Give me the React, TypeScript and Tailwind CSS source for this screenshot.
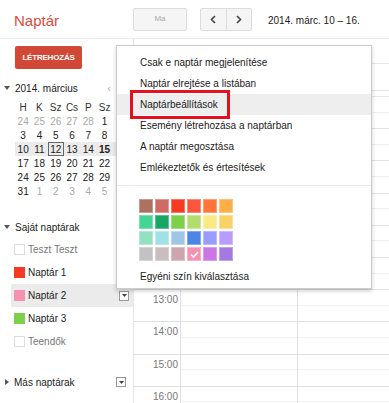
const swatches = [
  ["#ac725e", "#d06b64", "#f83a22", "#fa573c", "#ff7537", "#ffad46"],
  ["#42d692", "#16a765", "#7bd148", "#b3dc6c", "#fbe983", "#fad165"],
  ["#92e1c0", "#9fe1e7", "#9fc6e7", "#4986e7", "#9a9cff", "#b99aff"],
  ["#c2c2c2", "#cabdbf", "#cca6ac", "#f691b2", "#cd74e6", "#a47ae2"],
];

const weeks = [
  [24, 25, 26, 27, 28, 1, 2],
  [3, 4, 5, 6, 7, 8, 9],
  [10, 11, 12, 13, 14, 15, 16],
  [17, 18, 19, 20, 21, 22, 23],
  [24, 25, 26, 27, 28, 29, 30],
  [31, 1, 2, 3, 4, 5, 6],
];

const calendars = [
  { name: "Teszt Teszt", color: "", muted: true },
  { name: "Naptár 1", color: "bg-[#f83a22]" },
  { name: "Naptár 2", color: "bg-[#f691b2]", active: true },
  { name: "Naptár 3", color: "bg-[#7bd148]" },
  { name: "Teendők", color: "", muted: true },
];

const menuItems = [
  "Csak e naptár megjelenítése",
  "Naptár elrejtése a listában",
  "Naptárbeállítások",
  "Esemény létrehozása a naptárban",
  "A naptár megosztása",
  "Emlékeztetők és értesítések",
];

function Caret({ right }: { right?: boolean }) {
  return right ? (
    <svg width="4" height="6" viewBox="0 0 4 6">
      <path d="M0 0 L4 3 L0 6 Z" fill="#555" />
    </svg>
  ) : (
    <svg width="6" height="4" viewBox="0 0 6 4">
      <path d="M0 0 L6 0 L3 4 Z" fill="#555" />
    </svg>
  );
}

function DropBox() {
  return (
    <div className="flex h-[10px] w-[10px] items-center justify-center border border-[#999] bg-white">
      <svg width="5" height="3" viewBox="0 0 5 3">
        <path d="M0 0 L5 0 L2.5 3 Z" fill="#444" />
      </svg>
    </div>
  );
}

export default function App() {
  return (
    <div className="relative h-[403px] w-[389px] overflow-hidden bg-white font-['Liberation_Sans',Arial,sans-serif] text-[10px] text-[#222]">
      {/* top bar */}
      <div className="flex h-[39px] items-center border-b border-[#ebebeb]">
        <div className="w-[133px] pl-[14px] pt-[5px] text-[15px] text-[#dd4b39]">Naptár</div>
        <div className="flex h-[23px] w-[54px] items-center justify-center rounded-[2px] border border-[#dcdcdc] bg-[#f5f5f5] text-[8px] text-[#aaa]">
          Ma
        </div>
        <div className="ml-[13px] flex h-[23px] w-[52px] rounded-[2px] border border-[#dcdcdc] bg-[#f5f5f5]">
          <div className="flex flex-1 items-center justify-center border-r border-[#dcdcdc]">
            <svg width="6" height="9" viewBox="0 0 6 9">
              <path d="M5 1 L1.5 4.5 L5 8" stroke="#444" strokeWidth="1.6" fill="none" />
            </svg>
          </div>
          <div className="flex flex-1 items-center justify-center">
            <svg width="6" height="9" viewBox="0 0 6 9">
              <path d="M1 1 L4.5 4.5 L1 8" stroke="#444" strokeWidth="1.6" fill="none" />
            </svg>
          </div>
        </div>
        <div className="ml-[16px] pt-[2px] text-[10px] text-[#222]">2014. márc. 10 – 16.</div>
      </div>

      <div className="flex">
        {/* sidebar */}
        <div className="w-[133px] shrink-0">
          <div className="ml-[15px] mt-[7px] flex h-[23px] w-[67px] items-center justify-center rounded-[2px] bg-[#d14836] text-[8px] font-bold tracking-[-0.2px] text-white">
            LÉTREHOZÁS
          </div>

          <div className="mt-[12px] flex h-[14px] items-center pl-[4px]">
            <Caret />
            <span className="ml-[5px]">2014. március</span>
            <span className="ml-auto mr-[22px] text-[11px] text-[#aaa]">‹</span>
          </div>

          <div className="ml-[15px] mt-[5px] w-[114px]">
            <div className="grid h-[14px] grid-cols-7 items-center text-center text-[#333]">
              {["H", "K", "Sz", "Cs", "P", "Sz", ""].map((d, i) => (
                <span key={i}>{d}</span>
              ))}
            </div>
            {weeks.map((w, wi) => (
              <div
                key={wi}
                className={`grid h-[14px] grid-cols-7 items-center text-center ${wi === 2 ? "bg-[#ebebeb]" : ""}`}
              >
                {w.map((d, di) => {
                  const out = (wi === 0 && di < 5) || (wi === 5 && di > 0);
                  const today = wi === 2 && di === 2;
                  const bold = wi === 2 && di === 5;
                  return (
                    <span
                      key={di}
                      className={`flex h-[14px] items-center justify-center ${out ? "text-[#aaa]" : "text-[#222]"} ${bold ? "font-bold" : ""} ${today ? "border border-[#666]" : ""}`}
                    >
                      {di < 6 ? d : ""}
                    </span>
                  );
                })}
              </div>
            ))}
          </div>

          <div className="mt-[22px] flex h-[14px] items-center pl-[4px]">
            <Caret />
            <span className="ml-[5px]">Saját naptárak</span>
          </div>

          <div className="mt-[4px]">
            {calendars.map((c) => (
              <div
                key={c.name}
                className={`ml-[11px] flex h-[23px] items-center pl-[3px] pr-[4px] ${c.active ? "bg-[#ebebeb]" : ""}`}
              >
                <div
                  className={`h-[11px] w-[11px] ${c.color ? c.color : "border border-[#ddd] bg-white"}`}
                />
                <span className={`ml-[3px] ${c.muted ? "text-[#777]" : "text-[#222]"}`}>{c.name}</span>
                {c.active && (
                  <div className="ml-auto">
                    <DropBox />
                  </div>
                )}
              </div>
            ))}
          </div>

          <div className="mt-[22px] flex h-[14px] items-center pl-[5px] pr-[7px]">
            <Caret right />
            <span className="ml-[5px]">Más naptárak</span>
            <div className="ml-auto">
              <DropBox />
            </div>
          </div>
        </div>

        {/* main grid */}
        <div className="flex-1 border-l border-[#e5e5e5]">
          <div className="h-[25px] border-b border-[#e5e5e5]" />
          <div className="h-[27px] border-b border-[#e5e5e5]" />
          <div className="h-[6px] border-b border-[#e5e5e5]" />
          {Array.from({ length: 10 }).map((_, i) => (
            <div key={i} className="flex h-[32.2px] border-b border-[#e0e0e0]">
              <div className="w-[46px] shrink-0 pr-[2px] pt-[2px] text-right text-[10px] text-[#777]">
                {i + 7 >= 13 ? `${i + 7}:00` : ""}
              </div>
              <div className="w-[117px] shrink-0 border-l border-[#e0e0e0]">
                <div className="h-1/2 border-b border-[#f1f1f1]" />
              </div>
              <div className="flex-1 border-l border-[#e0e0e0]">
                <div className="h-1/2 border-b border-[#f1f1f1]" />
              </div>
            </div>
          ))}
        </div>
      </div>

      {/* dropdown menu */}
      <div className="absolute left-[116px] top-[45px] h-[244px] w-[256px] border border-[#ccc] bg-white pt-[6px] shadow-[0_2px_4px_rgba(0,0,0,0.2)]">
        {menuItems.map((m, i) => (
          <div
            key={m}
            className={`relative flex h-[21px] items-center pl-[23px] ${i === 2 ? "bg-[#eeeeee]" : ""}`}
          >
            {m}
            {i === 2 && (
              <div className="absolute left-[13px] top-[-4px] h-[29px] w-[100px] border-[3px] border-[#e4101c]" />
            )}
          </div>
        ))}
        <div className="mt-[7px] h-px bg-[#ebebeb]" />
        <div className="ml-[22px] mt-[13px] flex flex-col gap-[2px]">
          {swatches.map((row, ri) => (
            <div key={ri} className="flex gap-[2px]">
              {row.map((c) => (
                <div
                  key={c}
                  className="flex h-[14px] w-[14px] items-center justify-center border border-white/30"
                  style={{ backgroundColor: c }}
                >
                  {c === "#f691b2" && (
                    <svg width="9" height="7" viewBox="0 0 9 7">
                      <path d="M1 3.5 L3.5 6 L8 1" stroke="#fff" strokeWidth="1.6" fill="none" />
                    </svg>
                  )}
                </div>
              ))}
            </div>
          ))}
        </div>
        <div className="mt-[5px] flex h-[21px] items-center pl-[23px]">Egyéni szín kiválasztása</div>
      </div>
    </div>
  );
}
